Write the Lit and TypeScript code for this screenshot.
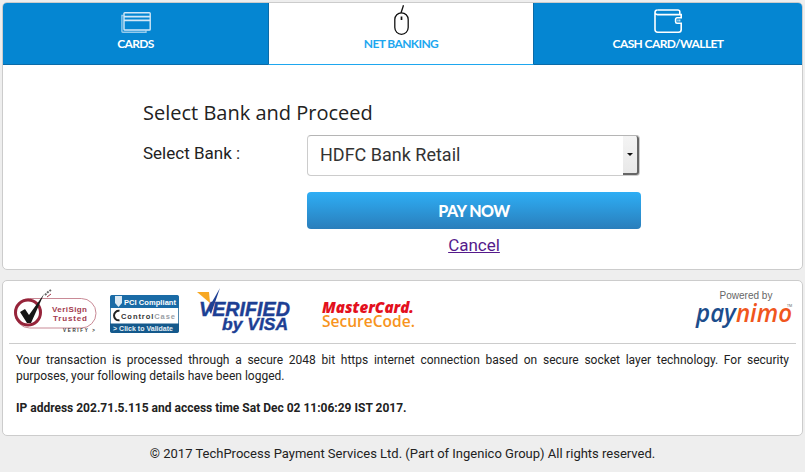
import { LitElement, html, css, svg } from "lit";
import { customElement } from "lit/decorators.js";

const cardIcon = svg`<svg width="30" height="21" viewBox="0 0 30 21" fill="none" stroke="#d3e8f7" stroke-width="1.4">
  <path d="M2.500 3.500H.9V19.300a.9.900 0 0 0 .9.9H25V18.600" opacity=".7"/>
  <rect x="3" y=".8" width="26.200" height="17.200" rx=".8"/>
  <path d="M3 4.600H29.200M3 8.300H29.200" stroke-width="1.800"/></svg>`;
const mouseIcon = svg`<svg width="15" height="30" viewBox="0 0 15 30" fill="none" stroke="#111" stroke-width="1.3">
  <path d="M7 8 9.500 .3"/><rect x=".8" y="7.800" width="13.400" height="21.500" rx="6.700"/>
  <path d="M7.500 11.500v3.500" stroke-width="1.700"/></svg>`;
const walletIcon = svg`<svg width="29" height="24" viewBox="0 0 29 24" fill="none" stroke="#fff" stroke-width="1.600">
  <path d="M3.500 1H24a1.800 1.800 0 0 1 1.800 1.800V5.600"/><path d="M1 3.600C1 2 2.100 1 3.500 1M1 3.600V20.500a2.700 2.700 0 0 0 2.700 2.700H24.500a2.700 2.700 0 0 0 2.700-2.700V5.600H3.500A2.600 2.600 0 0 1 1 3.600"/>
  <path d="M28 8.800H23a1.400 1.400 0 0 0-1.400 1.400v2.600a1.400 1.400 0 0 0 1.400 1.400h5" fill="#0586d2"/><path d="M24 10.500v2M25.800 10.500v2" stroke-width="1"/></svg>`;

const verisign = svg`<svg width="84" height="44" viewBox="0 0 84 44" style="font-family:'Liberation Sans',sans-serif">
  <rect x="1" y="9.500" width="81" height="29.500" rx="14.700" fill="#fff" stroke="#c98a96" stroke-width="1"/>
  <circle cx="14" cy="23.500" r="12.500" fill="#fff" stroke="#96243a" stroke-width="3"/>
  <path d="M6 23 11 20 15 26 30 5 17 34 13 34Z" fill="#161616"/>
  <path d="M31 6l3-3 3-2" stroke="#666" stroke-width="2" stroke-dasharray="2 1" fill="none"/>
  <path d="M33 8l4-3" stroke="#a33a4d" stroke-width="1" fill="none"/>
  <text x="38" y="22.500" font-size="8" font-weight="700" fill="#a33a4d" textLength="35" lengthAdjust="spacing">VeriSign</text>
  <text x="39" y="31.500" font-size="8" font-weight="700" fill="#a33a4d" textLength="34" lengthAdjust="spacing">Trusted</text>
  <text x="49" y="43" font-size="4.500" font-weight="700" fill="#333" textLength="32" lengthAdjust="spacing">VERIFY &gt;</text></svg>`;
const pci = svg`<svg width="69" height="38" viewBox="0 0 69 38" style="font-family:'Liberation Sans',sans-serif">
  <rect x=".5" y=".5" width="68" height="37" rx="2" fill="#fff" stroke="#4d86ad"/>
  <path d="M0 2a2 2 0 0 1 2-2h65a2 2 0 0 1 2 2v11H0Z" fill="#1a6ba6"/>
  <path d="M0 28.500h69v7.500a2 2 0 0 1-2 2H2a2 2 0 0 1-2-2Z" fill="#14598c"/>
  <path d="M5 1h7v7l-3.500 4L5 8Z" fill="#dbe9f3"/>
  <text x="14" y="9.500" font-size="7.500" font-weight="700" fill="#fff" textLength="52" lengthAdjust="spacing">PCI Compliant</text>
  <path d="M9.500 15.800a4.800 4.800 0 1 0 0 9.500" fill="none" stroke="#222" stroke-width="2"/>
  <text x="11" y="23.500" font-size="7.500" font-weight="700" fill="#333" textLength="54" lengthAdjust="spacing">Control<tspan fill="#9aa0a6">Case</tspan></text>
  <text x="3" y="36" font-size="7" font-weight="700" fill="#e4eff6" textLength="60" lengthAdjust="spacing">&gt; Click to Validate</text></svg>`;
const visa = svg`<svg width="98" height="44" viewBox="0 0 98 44" style="font-family:'Liberation Sans',sans-serif">
  <path d="M4 4 16 4 17 15Z" fill="#f7a823"/>
  <path d="M15 21 27 0 18 26Z" fill="#1d3f94"/>
  <text x="6" y="28" font-size="20.500" font-weight="700" font-style="italic" fill="#1d3f94" stroke="#1d3f94" stroke-width=".4" textLength="91" lengthAdjust="spacingAndGlyphs">VERIFIED</text>
  <text x="29" y="42" font-size="17" font-weight="700" font-style="italic" fill="#1d3f94" stroke="#1d3f94" stroke-width=".4" textLength="66" lengthAdjust="spacingAndGlyphs">by VISA</text></svg>`;
const mastercard = svg`<svg width="96" height="32" viewBox="0 0 96 32" style="font-family:'Open Sans','Liberation Sans',sans-serif">
  <text x="1" y="13.500" font-size="16" font-weight="800" font-style="italic" fill="#e3101d" textLength="92" lengthAdjust="spacingAndGlyphs">MasterCard.</text>
  <text x="1" y="28" font-size="16.500" font-weight="600" fill="#f7941d" textLength="93" lengthAdjust="spacingAndGlyphs">SecureCode.</text></svg>`;
const paynimo = svg`<svg width="98" height="28" viewBox="0 0 98 28" style="font-family:'Open Sans','Liberation Sans',sans-serif">
  <text x="0" y="20" font-size="25" font-style="italic" font-weight="600" fill="#f0561d" textLength="96" lengthAdjust="spacingAndGlyphs"><tspan fill="#1c4d8c">pay</tspan>nimo</text>
  <text x="91" y="5" font-size="3.500" fill="#555">TM</text></svg>`;

@customElement("app-root")
export class AppRoot extends LitElement {
  static styles = css`
    :host { display: block; width: 805px; height: 472px; background: #eee; overflow: hidden;
      font-family: Roboto, sans-serif; color: #222; padding: 2px 2px 0; box-sizing: border-box; }
    .card { background: #fff; border: 1px solid #ccc; border-radius: 5px; box-sizing: border-box; }
    .main { height: 268px; overflow: hidden; margin-bottom: 10px; }
    .tabs { display: grid; grid-template-columns: 265px 266px 1fr; height: 62px; box-sizing: border-box;
      background: #0586d2; border-bottom: 1px solid #0b6ba8; }
    .tab { display: flex; flex-direction: column; align-items: center; color: #fff; height: 62px; box-sizing: border-box;
      font: 700 12px Lato, sans-serif; letter-spacing: -0.6px; }
    .ico { height: 34px; box-sizing: border-box; padding-bottom: 4px; display: flex; align-items: flex-end; }
    .ico.mouse { padding-bottom: 2px; }
    .lbl { line-height: 14px; }
    .tab.active { background: #fff; color: #1ea7ef; border-left: 1px solid #0b6ba8; border-right: 1px solid #0b6ba8;
      border-bottom: 1px solid #1ea7ef; }
    .form { padding: 35px 0 0 140px; display: grid; grid-template-columns: 164px 334px; }
    h2 { grid-column: 1 / 3; margin: 0 0 9px; font: 400 20px/26px "Open Sans", sans-serif; color: #222; }
    .label { font-size: 17px; line-height: 20px; padding-top: 8px; }
    .select { height: 41px; width: 333px; box-sizing: border-box; border: 1px solid #ccc; border-top-color: #b5b5b5;
      border-radius: 4px; display: flex; align-items: stretch; }
    .val { flex: 1; padding-left: 12px; font-size: 18px; line-height: 38px; color: #333; }
    .arrow { width: 14px; background: linear-gradient(#f4f4f4, #e8e8e8); border-right: 2px solid #666;
      border-bottom: 2px solid #666; border-radius: 0 3px 3px 0; display: flex; align-items: center; justify-content: center; }
    .arrow i { border: 3px solid transparent; border-top: 3px solid #111; border-bottom: 0; }
    .pay { grid-column: 2; margin-top: 16px; height: 37px; border-radius: 4px; display: flex; align-items: center;
      justify-content: center; color: #fff; font: 900 16px Lato, sans-serif; letter-spacing: -0.5px;
      background: linear-gradient(#2eaef5, #2a7ebb); }
    .cancel { grid-column: 2; text-align: center; margin-top: 6px; font-size: 17px; line-height: 20px; }
    .cancel a { color: #551a8b; text-decoration: underline; }
    .trust { height: 156px; padding: 0 6px; }
    .logos { height: 62px; display: flex; align-items: flex-start; border-bottom: 1px solid #ccc; }
    .logos > * { flex: none; }
    .logos svg { display: block; overflow: visible; }
    .l1 { margin: 8px 0 0 5px; }
    .l2 { margin: 14px 0 0 12px; }
    .l3 { margin: 7px 0 0 14px; }
    .l4 { margin: 18px 0 0 30px; }
    .pay-brand { margin: 9px 2px 0 auto; width: 98px; text-align: center; }
    .pw { font: 400 10px/12px "Liberation Sans", sans-serif; color: #666; padding-left: 2px; }
    p { margin: 0; padding: 0 7px; font-size: 12px; line-height: 16px; color: #222; }
    .info { text-align: justify; padding-top: 8px; }
    .ip { font-weight: 700; padding-top: 16px; }
    footer { text-align: center; font-size: 13px; line-height: 18px; margin-top: 9px; color: #222; }
  `;

  render() {
    return html`
      <div class="card main">
        <div class="tabs">
          <div class="tab"><div class="ico">${cardIcon}</div><div class="lbl">CARDS</div></div>
          <div class="tab active"><div class="ico mouse">${mouseIcon}</div><div class="lbl">NET BANKING</div></div>
          <div class="tab"><div class="ico">${walletIcon}</div><div class="lbl">CASH CARD/WALLET</div></div>
        </div>
        <div class="form">
          <h2>Select Bank and Proceed</h2>
          <div class="label">Select Bank :</div>
          <div class="select"><div class="val">HDFC Bank Retail</div><div class="arrow"><i></i></div></div>
          <div class="pay">PAY NOW</div>
          <div class="cancel"><a>Cancel</a></div>
        </div>
      </div>
      <div class="card trust">
        <div class="logos">
          <div class="l1">${verisign}</div>
          <div class="l2">${pci}</div>
          <div class="l3">${visa}</div>
          <div class="l4">${mastercard}</div>
          <div class="pay-brand">
            <div class="pw">Powered by</div>
            ${paynimo}
          </div>
        </div>
        <p class="info">Your transaction is processed through a secure 2048 bit https internet connection based on secure socket layer technology. For security purposes, your following details have been logged.</p>
        <p class="ip">IP address 202.71.5.115 and access time Sat Dec 02 11:06:29 IST 2017.</p>
      </div>
      <footer>© 2017 TechProcess Payment Services Ltd. (Part of Ingenico Group) All rights reserved.</footer>
    `;
  }
}
